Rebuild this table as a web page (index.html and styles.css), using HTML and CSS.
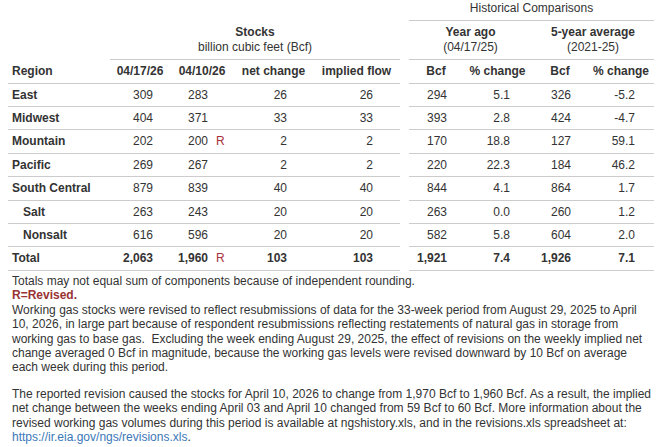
FILE: index.html
```html
<!DOCTYPE html>
<html>
<head>
<meta charset="utf-8">
<link rel="stylesheet" href="styles.css">
</head>
<body>
<table class="storage">
  <colgroup>
    <col class="w-region"><col class="w-c1"><col class="w-c2"><col class="w-c3"><col class="w-c4">
    <col class="w-gap">
    <col class="w-c5"><col class="w-c6"><col class="w-c7"><col class="w-c8">
  </colgroup>
  <thead>
    <tr class="top">
      <th colspan="5" class="blank"></th>
      <th class="gap"></th>
      <th colspan="4" class="hist">Historical Comparisons</th>
    </tr>
    <tr class="group">
      <th class="blank"></th>
      <th colspan="4" class="grp"><b>Stocks</b><br><span class="sub">billion cubic feet (Bcf)</span></th>
      <th class="gap"></th>
      <th colspan="2" class="grp"><b>Year ago</b><br><span class="sub">(04/17/25)</span></th>
      <th colspan="2" class="grp"><b>5-year average</b><br><span class="sub">(2021-25)</span></th>
    </tr>
    <tr class="cols">
      <th class="region">Region</th>
      <th>04/17/26</th>
      <th>04/10/26</th>
      <th>net change</th>
      <th>implied flow</th>
      <th class="gap"></th>
      <th>Bcf</th>
      <th>% change</th>
      <th>Bcf</th>
      <th>% change</th>
    </tr>
  </thead>
  <tbody>
    <tr>
      <td class="region">East</td>
      <td class="c1">309</td><td class="c2">283<span class="rev"></span></td><td class="c3">26</td><td class="c4">26</td>
      <td class="gap"></td>
      <td class="c5">294</td><td class="c6">5.1</td><td class="c7">326</td><td class="c8">-5.2</td>
    </tr>
    <tr>
      <td class="region">Midwest</td>
      <td class="c1">404</td><td class="c2">371<span class="rev"></span></td><td class="c3">33</td><td class="c4">33</td>
      <td class="gap"></td>
      <td class="c5">393</td><td class="c6">2.8</td><td class="c7">424</td><td class="c8">-4.7</td>
    </tr>
    <tr>
      <td class="region">Mountain</td>
      <td class="c1">202</td><td class="c2">200<span class="rev">R</span></td><td class="c3">2</td><td class="c4">2</td>
      <td class="gap"></td>
      <td class="c5">170</td><td class="c6">18.8</td><td class="c7">127</td><td class="c8">59.1</td>
    </tr>
    <tr>
      <td class="region">Pacific</td>
      <td class="c1">269</td><td class="c2">267<span class="rev"></span></td><td class="c3">2</td><td class="c4">2</td>
      <td class="gap"></td>
      <td class="c5">220</td><td class="c6">22.3</td><td class="c7">184</td><td class="c8">46.2</td>
    </tr>
    <tr>
      <td class="region">South Central</td>
      <td class="c1">879</td><td class="c2">839<span class="rev"></span></td><td class="c3">40</td><td class="c4">40</td>
      <td class="gap"></td>
      <td class="c5">844</td><td class="c6">4.1</td><td class="c7">864</td><td class="c8">1.7</td>
    </tr>
    <tr>
      <td class="region sub-region">Salt</td>
      <td class="c1">263</td><td class="c2">243<span class="rev"></span></td><td class="c3">20</td><td class="c4">20</td>
      <td class="gap"></td>
      <td class="c5">263</td><td class="c6">0.0</td><td class="c7">260</td><td class="c8">1.2</td>
    </tr>
    <tr>
      <td class="region sub-region">Nonsalt</td>
      <td class="c1">616</td><td class="c2">596<span class="rev"></span></td><td class="c3">20</td><td class="c4">20</td>
      <td class="gap"></td>
      <td class="c5">582</td><td class="c6">5.8</td><td class="c7">604</td><td class="c8">2.0</td>
    </tr>
    <tr class="total">
      <td class="region">Total</td>
      <td class="c1">2,063</td><td class="c2">1,960<span class="rev">R</span></td><td class="c3">103</td><td class="c4">103</td>
      <td class="gap"></td>
      <td class="c5">1,921</td><td class="c6">7.4</td><td class="c7">1,926</td><td class="c8">7.1</td>
    </tr>
  </tbody>
</table>
<div class="notes">
  <p class="note-line">Totals may not equal sum of components because of independent rounding.<br><span class="revised">R=Revised.</span><br>Working gas stocks were revised to reflect resubmissions of data for the 33-week period from August 29, 2025 to April 10, 2026, in large part because of respondent resubmissions reflecting restatements of natural gas in storage from working gas to base gas.&nbsp; Excluding the week ending August 29, 2025, the effect of revisions on the weekly implied net change averaged 0 Bcf in magnitude, because the working gas levels were revised downward by 10 Bcf on average each week during this period.</p>
  <p class="note-line">The reported revision caused the stocks for April 10, 2026 to change from 1,970 Bcf to 1,960 Bcf. As a result, the implied net change between the weeks ending April 03 and April 10 changed from 59 Bcf to 60 Bcf. More information about the revised working gas volumes during this period is available at ngshistory.xls, and in the revisions.xls spreadsheet at: <a class="link" href="#">https://ir.eia.gov/ngs/revisions.xls</a>.</p>
</div>
</body>
</html>
```

FILE: styles.css
```css
html, body {
  background: #ffffff;
}
body {
  margin: 0 8px;
  font-family: "Liberation Sans", Arial, sans-serif;
  font-size: 12px;
  line-height: 14.4px;
  color: #333333;
}
.storage {
  width: 646px;
  table-layout: fixed;
  border-collapse: collapse;
  border-spacing: 0;
}
.w-region { width: 102px; }
.w-c1 { width: 60px; }
.w-c2 { width: 64px; }
.w-c3 { width: 79px; }
.w-c4 { width: 87px; }
.w-gap { width: 9px; }
.w-c5 { width: 54px; }
.w-c6 { width: 69px; }
.w-c7 { width: 56px; }
.w-c8 { width: 66px; }

.storage th,
.storage td {
  padding: 4px 0;
  border-bottom: 1px solid #cccccc;
  white-space: nowrap;
}
.storage th {
  font-weight: bold;
  text-align: center;
}
.storage .blank,
.storage .gap {
  border-bottom: none;
}
.storage tr.top th {
  padding: 1px 0 5px;
}
.storage th.hist {
  font-weight: normal;
}
.storage th.grp {
  font-weight: normal;
  padding: 4px 0 5px;
}
.storage th.grp b {
  font-weight: bold;
}
.storage .region {
  text-align: left;
  padding-left: 4px;
  font-weight: bold;
}
.storage .sub-region {
  padding-left: 15px;
}
.storage td {
  text-align: right;
}
.c1 { padding-right: 17px !important; }
.c2 { padding-right: 11px !important; }
.c3 { padding-right: 26px !important; }
.c4 { padding-right: 27px !important; }
.c5 { padding-right: 16px !important; }
.c6 { padding-right: 22px !important; }
.c7 { padding-right: 17px !important; }
.c8 { padding-right: 19px !important; }
.rev {
  display: inline-block;
  width: 15px;
  padding-left: 8px;
  box-sizing: border-box;
  text-align: left;
  color: #a8323a;
  font-weight: normal;
}
.total td {
  font-weight: bold;
}
.notes {
  padding: 3px 0 0 4px;
}
.note-line {
  margin: 0 0 12px;
}
.revised {
  color: #993333;
  font-weight: bold;
}
.link {
  color: #3b78b8;
  text-decoration: none;
}
```
